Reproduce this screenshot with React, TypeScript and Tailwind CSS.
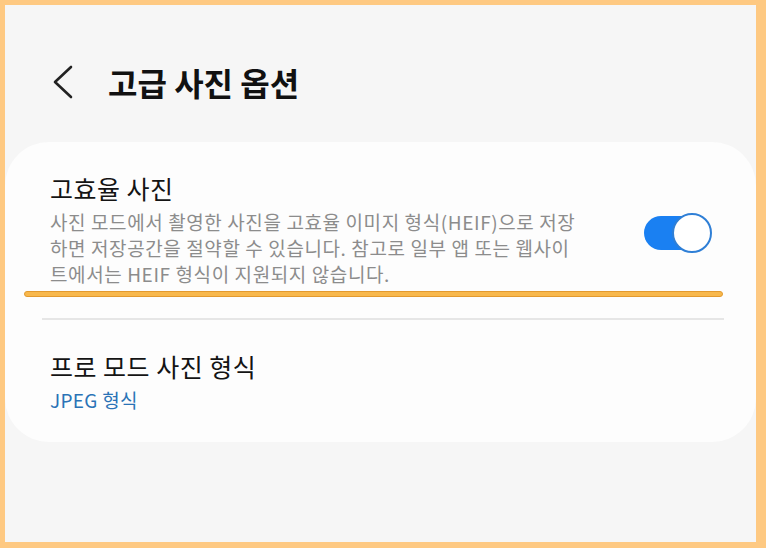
import React from "react";

const font = { fontFamily: '"Noto Sans CJK KR", "Noto Sans", sans-serif' };

function Toggle() {
  return (
    <div className="relative h-[40px] w-[68px] shrink-0">
      <div className="absolute left-0 top-[3px] h-[34px] w-[58px] rounded-full bg-[#1a80f2]" />
      <div className="absolute right-0 top-0 h-[40px] w-[40px] rounded-full border-2 border-[#2f7fd6] bg-white" />
    </div>
  );
}

export default function App() {
  return (
    <div
      className="h-[548px] w-[766px] bg-[#fec982] pb-[6px] pl-[5px] pr-[10px] pt-[5px]"
      style={font}
    >
      <div className="flex h-full flex-col bg-[#f6f6f6]">
        <header className="mb-[40px] mt-[57px] flex h-[40px] items-center pl-[45px]">
          <svg width="24" height="34" viewBox="0 0 24 34" fill="none">
            <path d="M21 2L5 17l16 15" stroke="#222" strokeWidth="2.6" strokeLinecap="round" strokeLinejoin="round" />
          </svg>
          <h1 className="ml-[34px] text-[32px] font-bold leading-[40px] text-[#111]">고급 사진 옵션</h1>
        </header>

        <section className="relative rounded-[44px] bg-[#fdfdfd]">
          <div className="flex items-center pb-[31px] pl-[45px] pr-[44px] pt-[30px]">
            <div className="w-[560px]">
              <div className="text-[25px] leading-[32px] tracking-[0.5px] text-[#141414]">고효율 사진</div>
              <p className="mt-[5px] text-[19px] leading-[26px] tracking-[0.6px] text-[#8c8c8c]">
                사진 모드에서 촬영한 사진을 고효율 이미지 형식(HEIF)으로 저장
                <br />
                하면 저장공간을 절약할 수 있습니다. 참고로 일부 앱 또는 웹사이
                <br />
                트에서는 HEIF 형식이 지원되지 않습니다.
              </p>
            </div>
            <div className="ml-auto pt-[7px]">
              <Toggle />
            </div>
          </div>

          <div className="absolute left-[19px] top-[149px] h-[6px] w-[699px] rounded-full border border-[#e39a2e] bg-[#f8b84c]" />

          <div className="ml-[37px] mr-[32px] h-[2px] bg-[#e6e6e6]" />

          <div className="pb-[30px] pl-[45px] pt-[30px]">
            <div className="text-[25px] leading-[32px] tracking-[0.5px] text-[#141414]">프로 모드 사진 형식</div>
            <div className="mt-[6px] text-[19px] leading-[24px] tracking-[0.3px] text-[#2a73b6]">JPEG 형식</div>
          </div>
        </section>
      </div>
    </div>
  );
}
